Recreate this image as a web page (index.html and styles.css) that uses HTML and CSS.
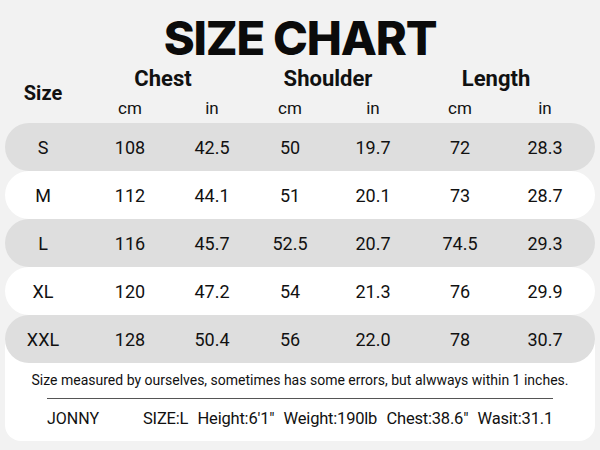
FILE: index.html
```html
<!DOCTYPE html>
<html>
<head>
<meta charset="utf-8">
<link rel="stylesheet" href="styles.css">
</head>
<body>
<div class="page">
  <h1 class="title">SIZE CHART</h1>
  <div class="head">
    <div class="size-h">Size</div>
    <div class="grp g1">Chest</div>
    <div class="grp g2">Shoulder</div>
    <div class="grp g3">Length</div>
    <div class="unit u1">cm</div><div class="unit u2">in</div>
    <div class="unit u3">cm</div><div class="unit u4">in</div>
    <div class="unit u5">cm</div><div class="unit u6">in</div>
  </div>
  <div class="rows">
    <div class="row gray"><span>S</span><span>108</span><span>42.5</span><span>50</span><span>19.7</span><span>72</span><span>28.3</span></div>
    <div class="row white"><span>M</span><span>112</span><span>44.1</span><span>51</span><span>20.1</span><span>73</span><span>28.7</span></div>
    <div class="row gray"><span>L</span><span>116</span><span>45.7</span><span>52.5</span><span>20.7</span><span>74.5</span><span>29.3</span></div>
    <div class="row white"><span>XL</span><span>120</span><span>47.2</span><span>54</span><span>21.3</span><span>76</span><span>29.9</span></div>
    <div class="row gray"><span>XXL</span><span>128</span><span>50.4</span><span>56</span><span>22.0</span><span>78</span><span>30.7</span></div>
  </div>
  <div class="foot">
    <p class="note">Size measured by ourselves, sometimes has some errors, but alwways within 1 inches.</p>
    <div class="rule"></div>
    <div class="model">
      <span class="name">JONNY</span>
      <span class="stats"><span>SIZE:L</span><span>Height:6'1"</span><span>Weight:190lb</span><span>Chest:38.6"</span><span>Wasit:31.1</span></span>
    </div>
  </div>
</div>
</body>
</html>
```
FILE: styles.css
```css
html, body {
  margin: 0;
  padding: 0;
}
body {
  width: 600px;
  height: 450px;
  overflow: hidden;
  background: #f2f2f2;
  font-family: Roboto, "Noto Sans", sans-serif;
  color: #111;
}
.page {
  padding: 0 5px;
}
.title {
  margin: 0;
  padding-top: 14px;
  height: 50px;
  font-family: Inter, sans-serif;
  font-weight: 800;
  font-size: 47px;
  line-height: 48px;
  text-align: center;
  letter-spacing: -1.2px;
  color: #0b0b0b;
}
.head {
  display: grid;
  grid-template-columns: 76px 98px 66px 90px 76px 98px 72px 1fr;
  grid-template-rows: 28px 31px;
  align-items: center;
  justify-items: center;
}
.size-h {
  grid-column: 1;
  grid-row: 1 / 3;
  font-weight: 700;
  font-size: 20px;
  padding-bottom: 2px;
}
.grp {
  font-weight: 700;
  font-size: 22px;
  grid-row: 1;
}
.g1 { grid-column: 2 / 4; }
.g2 { grid-column: 4 / 6; }
.g3 { grid-column: 6 / 8; }
.unit {
  grid-row: 2;
  font-size: 17px;
}
.u1 { grid-column: 2; }
.u2 { grid-column: 3; }
.u3 { grid-column: 4; }
.u4 { grid-column: 5; }
.u5 { grid-column: 6; }
.u6 { grid-column: 7; }
.rows {
  position: relative;
  z-index: 1;
}
.row {
  display: grid;
  grid-template-columns: 76px 98px 66px 90px 76px 98px 72px 1fr;
  height: 48px;
  align-items: center;
  justify-items: center;
  border-radius: 24px;
  font-size: 18px;
}
.row.gray { background: #dedede; }
.row.white { background: #ffffff; }
.foot {
  background: #ffffff;
  margin-top: -24px;
  padding-top: 24px;
  height: 78px;
  border-radius: 0 0 16px 16px;
  display: flex;
  flex-direction: column;
  align-items: center;
}
.note {
  margin: 0;
  padding-top: 9px;
  font-size: 14px;
  line-height: 16px;
  color: #111;
}
.rule {
  width: 506px;
  height: 1px;
  background: #555;
  margin-top: 10px;
}
.model {
  width: 506px;
  display: flex;
  align-items: center;
  margin-top: 10px;
}
.name {
  font-size: 16px;
  width: 96px;
}
.stats {
  flex: 1;
  display: flex;
  justify-content: space-between;
  font-size: 16.5px;
  letter-spacing: -0.2px;
}
```
